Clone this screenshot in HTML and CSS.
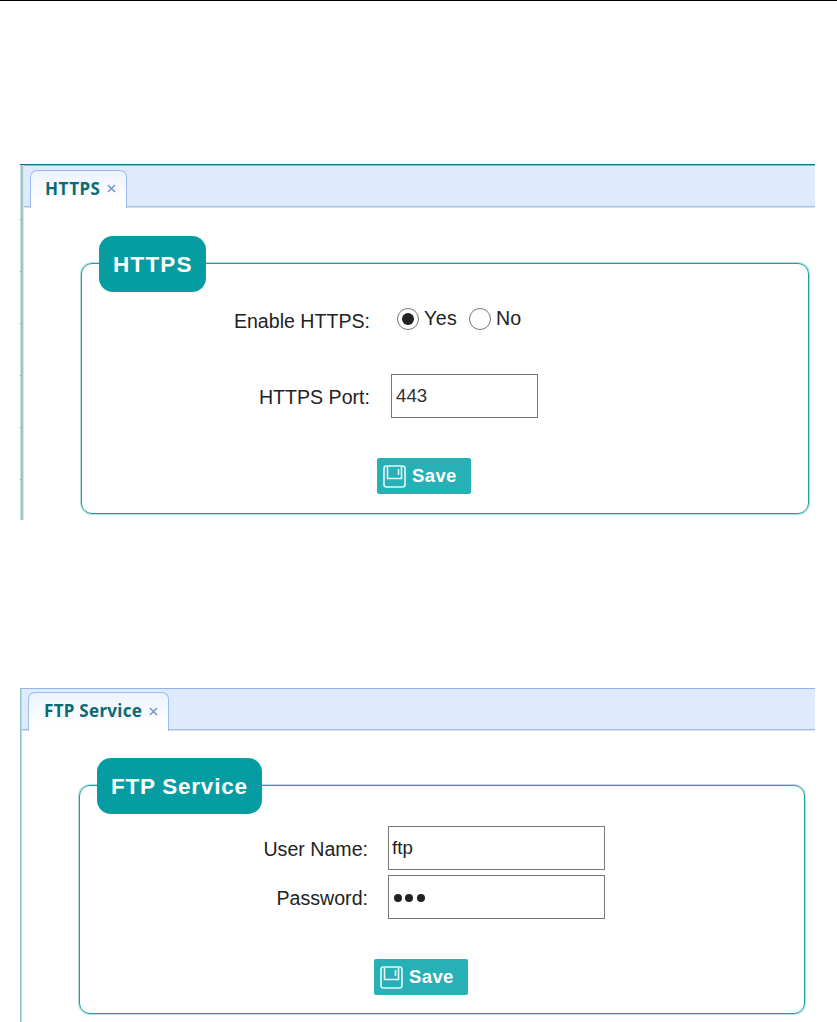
FILE: index.html
```html
<!DOCTYPE html>
<html lang="en">
<head>
<meta charset="utf-8">
<title>Service settings</title>
<link rel="stylesheet" href="styles.css">
</head>
<body>
<section class="panel panel-https">
  <div class="rail"><i></i><i></i><i></i><i></i><i></i><i></i></div>
  <div class="content">
    <div class="tabs"><div class="tab"><span class="tab-name">HTTPS</span><svg class="close" viewBox="0 0 10 10"><path d="M1 1l8 8M9 1l-8 8"/></svg></div></div>
    <div class="group">
      <div class="legend"><span>HTTPS</span></div>
      <div class="row row-enable">
        <span class="label">Enable HTTPS:</span>
        <span class="radios">
          <span class="radio on"></span><span class="yes">Yes</span>
          <span class="radio"></span><span class="no">No</span>
        </span>
      </div>
      <div class="row row-port">
        <span class="label">HTTPS Port:</span>
        <span class="field"><span>443</span></span>
      </div>
      <div class="save"><svg class="disk" viewBox="0 0 23 23"><rect x="1" y="1" width="21" height="21" rx="2.5"/><path d="M4.5 1.5v12h14v-12M15.5 4v6"/></svg><span>Save</span></div>
    </div>
  </div>
</section>
<section class="panel panel-ftp">
  <div class="rail"></div>
  <div class="content">
    <div class="tabs"><div class="tab"><span class="tab-name">FTP Service</span><svg class="close" viewBox="0 0 10 10"><path d="M1 1l8 8M9 1l-8 8"/></svg></div></div>
    <div class="group">
      <div class="legend"><span>FTP Service</span></div>
      <div class="row row-user">
        <span class="label">User Name:</span>
        <span class="field"><span>ftp</span></span>
      </div>
      <div class="row row-pass">
        <span class="label">Password:</span>
        <span class="field dots"><i></i><i></i><i></i></span>
      </div>
      <div class="save"><svg class="disk" viewBox="0 0 23 23"><rect x="1" y="1" width="21" height="21" rx="2.5"/><path d="M4.5 1.5v12h14v-12M15.5 4v6"/></svg><span>Save</span></div>
    </div>
  </div>
</section>
</body>
</html>
```
FILE: styles.css
```css
* { box-sizing: border-box; }
body {
  margin: 0;
  height: 1022px;
  overflow: hidden;
  border-top: 1px solid #000;
  background: #fff;
  color: #222;
  font: 19.6px/24px "Liberation Sans", Arial, sans-serif;
}
.panel { display: flex; width: 795px; margin-left: 20px; }
.content { flex: 1; min-width: 0; }
.panel-https { margin-top: 163px; height: 356px; border-top: 1px solid #0a7478; }
.panel-ftp { margin-top: 168px; height: 334px; border-top: 1px solid #94b6e6; }

/* Left edge of each panel */
.rail { width: 4px; border-left: 1px solid #c3e2e2; background: linear-gradient(90deg, #90c4c5 1px, #a9cbd1 1px 2px, #d3e1f5 2px); }
.panel-https .rail { display: flex; flex-direction: column; gap: 51px; padding-top: 54px; }
.rail i { width: 1px; height: 1px; margin-left: -1px; background: #5ba9aa; }
.panel-ftp .rail { width: 2px; border-left-color: #8dc5c8; background: #bdd7e6; }

.tabs { display: flex; height: 42px; background: #deebfe; border-bottom: 1px solid #a4c1ec; box-shadow: 0 1px #d3e1f7; }
.panel-https .tabs { border-top: 1px solid #9bb9df; }
.panel-ftp .tabs { height: 41px; }
.tab {
  display: flex;
  align-items: center;
  border: 1px solid #9bbcf0;
  border-bottom: 0;
  border-radius: 7px 7px 0 0;
  background: linear-gradient(#ecf3ff, #fff 85%);
  color: #0b6a72;
  font: bold 17px/20px "Noto Sans", sans-serif;
}
.panel-https .tab { width: 97px; height: 38px; margin: 4px 0 0 6px; padding: 0 0 2px 14px; }
.panel-ftp .tab { width: 141px; height: 39px; margin: 3px 0 0 6px; padding: 0 0 2px 15px; }
.tab-name { white-space: nowrap; letter-spacing: .3px; }
.panel-https .tab-name { width: 62px; letter-spacing: .5px; }
.panel-ftp .tab-name { width: 105px; }
.close { flex: none; width: 9px; height: 9px; fill: none; stroke: #7292c9; stroke-width: 1.6; }

.group { border: 1px solid #16a0a3; border-radius: 11px; box-shadow: 0 0 0 1px #b5dfe0; }
.panel-https .group { width: 728px; height: 251px; margin: 56px 0 0 57px; }
.panel-ftp .group { width: 726px; height: 229px; margin: 55px 0 0 57px; }
.legend {
  height: 56px;
  margin: -28px 0 0 17px;
  padding-left: 14px;
  border-radius: 14px;
  background: #059da1;
  color: #fff;
  font-size: 22.5px;
  font-weight: bold;
  line-height: 58px;
  white-space: nowrap;
}
.panel-https .legend { width: 107px; letter-spacing: 1.2px; }
.panel-ftp .legend { width: 165px; letter-spacing: .75px; }

.row { display: flex; white-space: nowrap; }
.label { width: 288px; text-align: right; }
.row-enable { height: 24px; margin-top: 17px; }
.radios { display: flex; align-items: center; margin: -6px 0 0 27px; }
.radio { display: grid; place-items: center; width: 22px; height: 22px; margin-top: 1px; border: 1px solid #777; border-radius: 50%; }
.on::after { content: ""; width: 12px; height: 12px; border-radius: 50%; background: #222; }
.yes { width: 35px; margin: 0 10px 0 5px; letter-spacing: .4px; }
.no { margin-left: 5px; }
.field { display: flex; align-items: center; height: 44px; margin-left: 21px; padding-left: 4px; border: 1px solid #777; }
.row-port { height: 44px; margin-top: 41px; }
.row-port .label { margin-top: 11px; }
.row-port .field { width: 147px; font-size: 18.7px; color: #333; }
.row-user { margin-top: 12px; height: 44px; }
.row-user .label, .row-pass .label { margin-top: 11px; }
.row-pass { margin-top: 5px; height: 44px; }
.panel-ftp .field { width: 217px; margin-left: 20px; padding-left: 3px; font-size: 18.7px; }
.dots i { width: 8px; height: 8px; margin: 2px 1.8px 0; border-radius: 50%; background: #222; }

.save {
  display: flex;
  align-items: center;
  width: 94px;
  height: 36px;
  padding-left: 6px;
  border-radius: 2px;
  background: #27b0b6;
  color: #fff;
  font-size: 18.5px;
  font-weight: bold;
}
.save span { margin-left: 6px; letter-spacing: .4px; }
.disk { width: 23px; height: 23px; fill: none; stroke: #e3f8f8; stroke-width: 1.6; }
.panel-https .save { margin: 40px 0 0 295px; }
.panel-ftp .save { margin: 40px 0 0 294px; }
```
